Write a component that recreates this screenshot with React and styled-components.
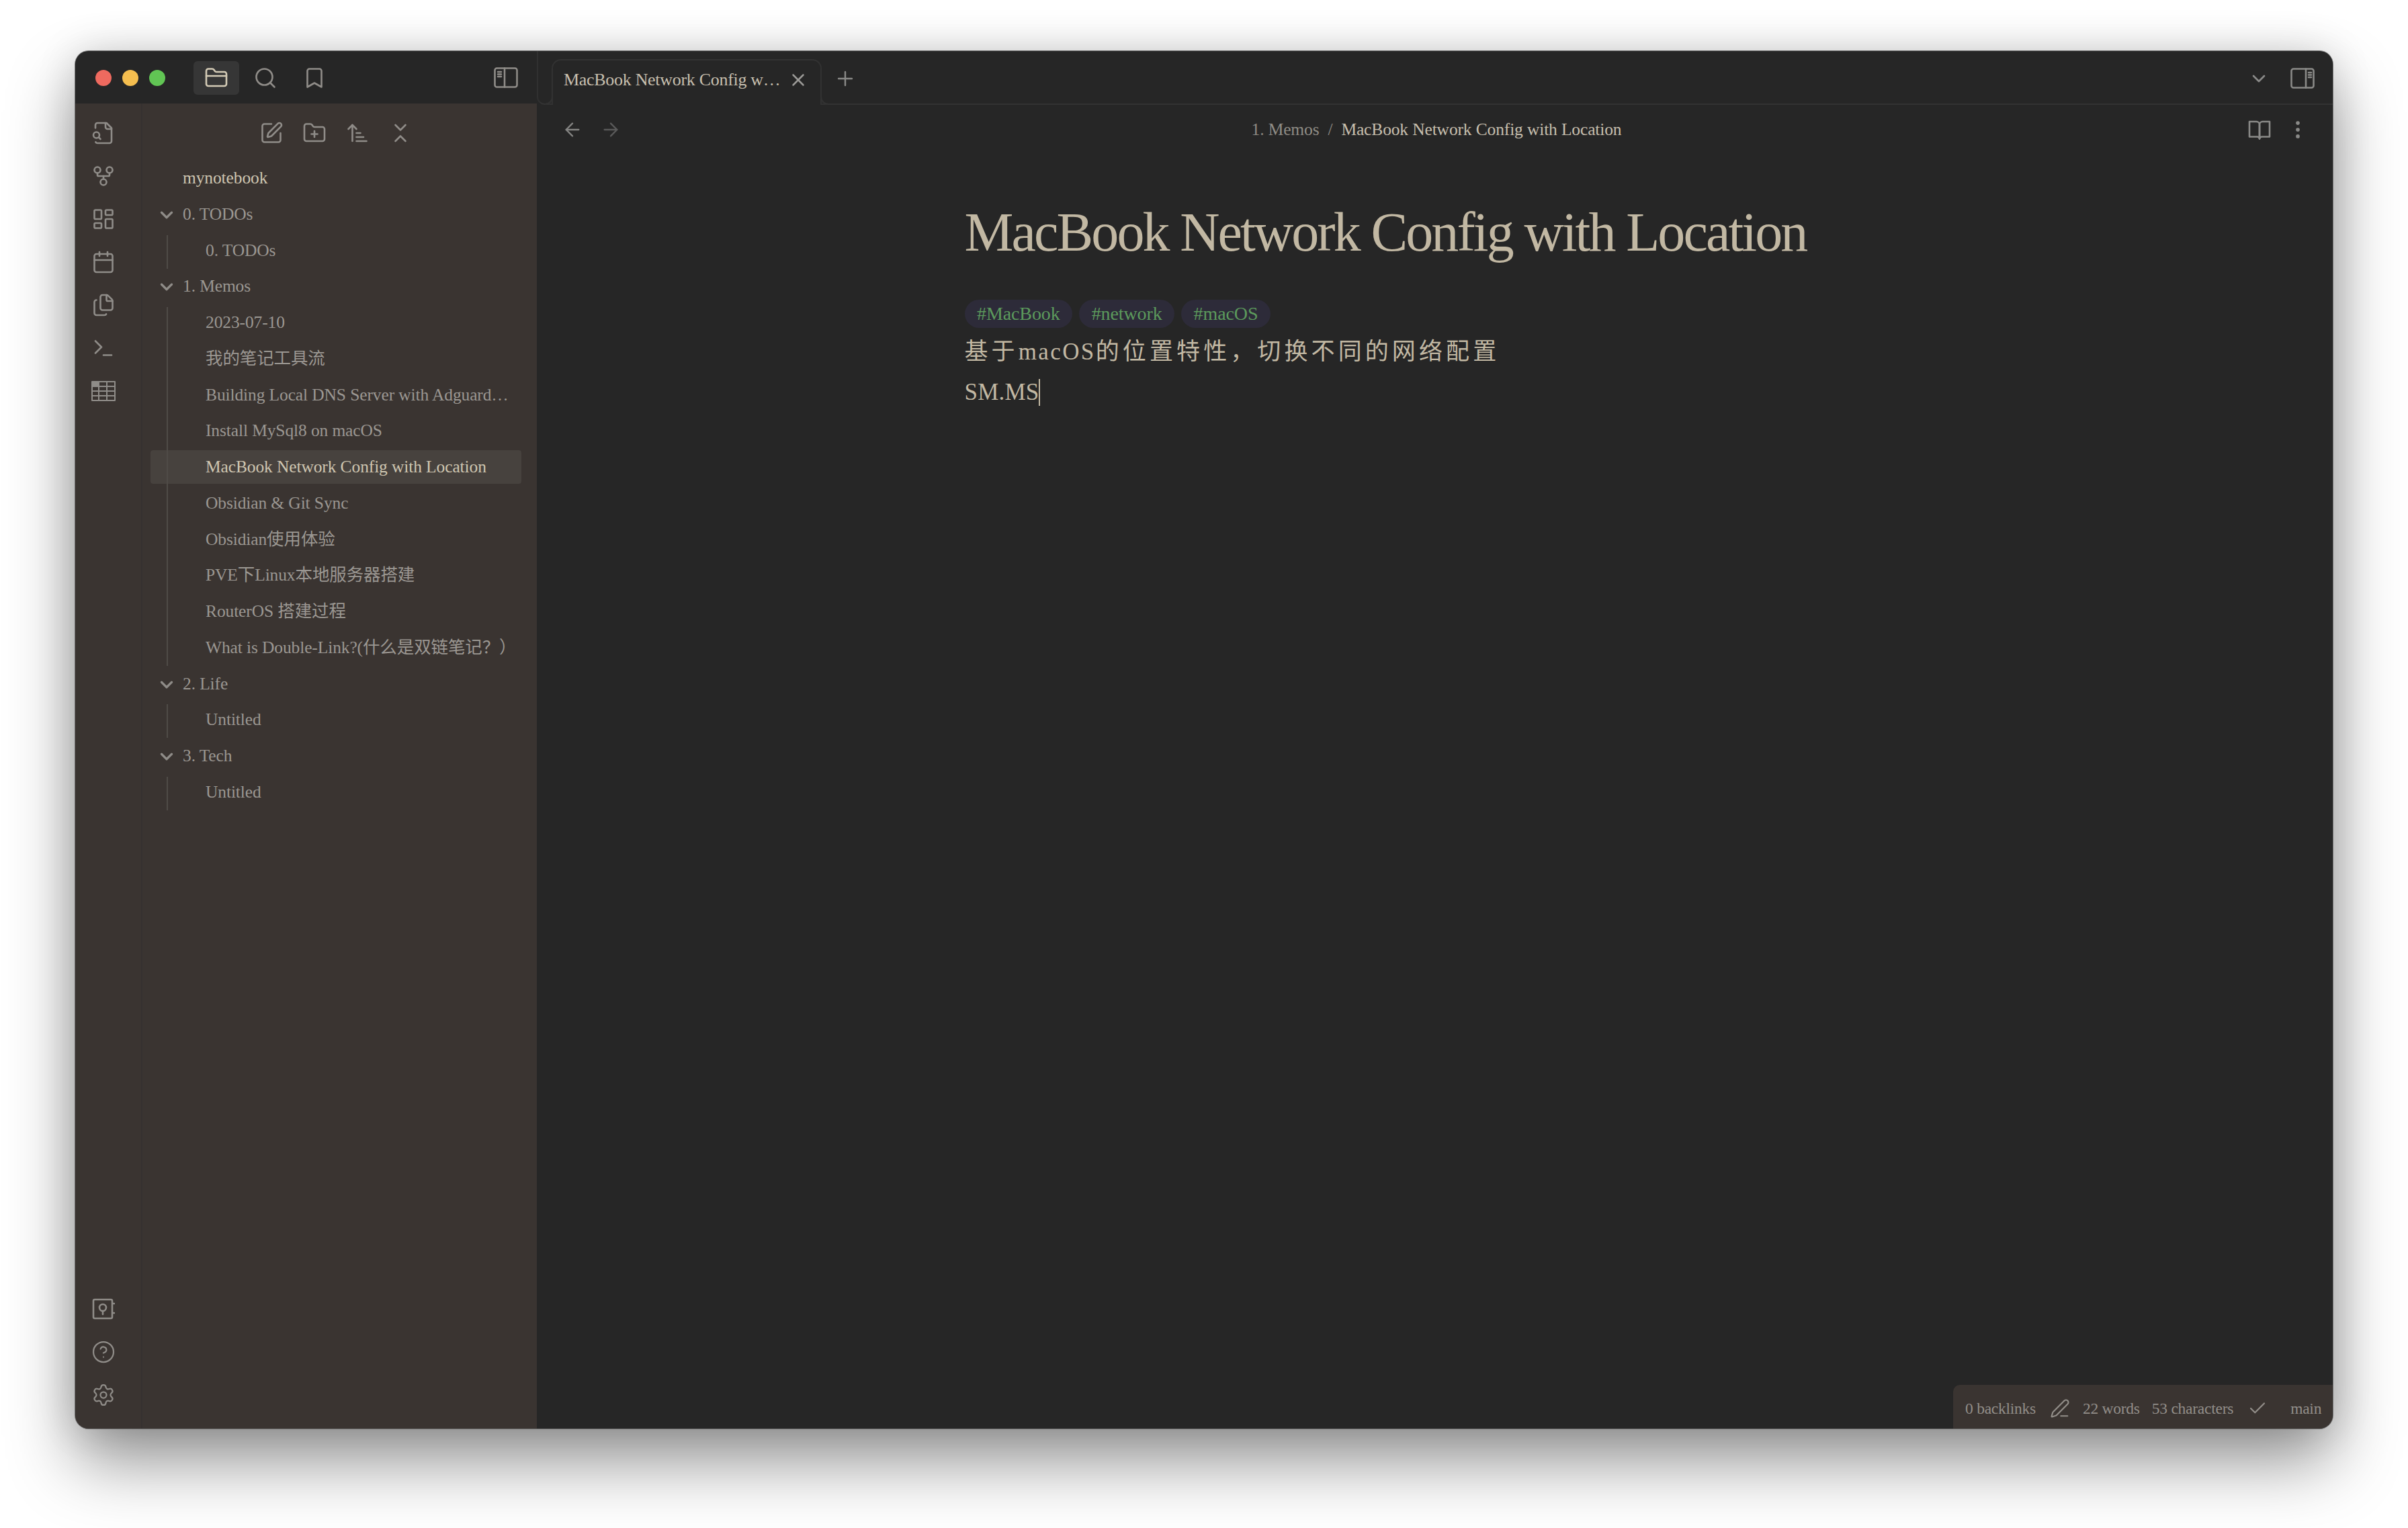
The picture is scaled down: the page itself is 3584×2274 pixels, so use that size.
import styled, { createGlobalStyle } from "styled-components";
import {
  ArrowLeft,
  ArrowRight,
  ArrowUpNarrowWide,
  Bookmark,
  Calendar,
  Check,
  ChevronDown,
  ChevronsDownUp,
  CircleHelp,
  EllipsisVertical,
  Files,
  FolderClosed,
  FolderPlus,
  GitFork,
  LayoutDashboard,
  PenLine,
  Plus,
  Search,
  Settings,
  SquarePen,
  Terminal,
  X,
} from "lucide-react";

const serif = `"Liberation Serif", "Noto Sans CJK SC", serif`;

const GlobalStyle = createGlobalStyle`
  html, body {
    margin: 0;
    background: #fff;
  }
  * {
    box-sizing: border-box;
  }
`;

const Page = styled.div`
  width: 3584px;
  height: 2274px;
  padding: 76px 112px 148px;
  background: #fff;
  font-family: ${serif};
  overflow: hidden;
`;

const Window = styled.div`
  position: relative;
  display: flex;
  width: 3360px;
  height: 2050px;
  border-radius: 20px;
  overflow: hidden;
  background: #262626;
`;

const WindowShadow = styled.div`
  width: 3360px;
  height: 2050px;
  border-radius: 20px;
  box-shadow: 0 0 0 1px rgba(90, 90, 90, 0.75), 0 50px 100px rgba(0, 0, 0, 0.42),
    0 0 60px rgba(0, 0, 0, 0.14);
`;

const LeftPane = styled.div`
  display: flex;
  flex-direction: column;
  flex: none;
  width: 687px;
`;

const TitleBar = styled.div`
  display: flex;
  align-items: center;
  flex: none;
  height: 78px;
  padding: 2px 12px 0 30px;
  background: #262626;
`;

const Lights = styled.div`
  display: flex;
  gap: 16px;
  margin-right: 42px;
`;

const Light = styled.span`
  width: 24px;
  height: 24px;
  border-radius: 50%;
  background: ${(p) => p.$color};
`;

const NavTabs = styled.div`
  display: flex;
  gap: 5px;
`;

const NavTab = styled.div`
  display: flex;
  align-items: center;
  justify-content: center;
  width: 68px;
  height: 50px;
  border-radius: 6px;
  color: ${(p) => (p.$active ? "#d3cab5" : "#8f8c88")};
  background: ${(p) => (p.$active ? "#363636" : "transparent")};
`;

const PanelToggle = styled(NavTab)`
  margin-left: auto;
`;

const SidebarBody = styled.div`
  display: flex;
  flex: 1;
  min-height: 0;
  background: #3a3431;
`;

const Ribbon = styled.div`
  display: flex;
  flex-direction: column;
  flex: none;
  width: 100px;
  padding: 12px 14px 18px 0;
  border-right: 2px solid #353130;
`;

const RibbonSpacer = styled.div`
  flex: 1;
`;

const RibbonItem = styled.div`
  display: flex;
  align-items: center;
  justify-content: center;
  height: 64px;
  color: #8f8c88;
`;

const Sidebar = styled.div`
  flex: 1;
  min-width: 0;
`;

const SideToolbar = styled.div`
  display: flex;
  align-items: center;
  justify-content: center;
  height: 86px;
  padding: 2px 12px 0 0;
  color: #8f8c88;
`;

const ToolButton = styled.div`
  display: flex;
  align-items: center;
  justify-content: center;
  width: 64px;
`;

const Tree = styled.div`
  display: flex;
  flex-direction: column;
  gap: 3.75px;
  padding: 0 23px 0 12px;
`;

const TreeFolder = styled.div`
  display: flex;
  flex-direction: column;
  gap: 3.75px;
`;

const TreeGroup = styled.div`
  position: relative;
  display: flex;
  flex-direction: column;
  gap: 3.75px;

  &::before {
    content: "";
    position: absolute;
    left: 24px;
    top: 2px;
    bottom: -2px;
    width: 2px;
    background: #4f4b47;
  }
`;

const Row = styled.div`
  display: flex;
  align-items: center;
  height: 50px;
  padding-left: ${(p) => (p.$child ? "82px" : "48px")};
  padding-right: 20px;
  border-radius: 4px;
  font-size: 25.5px;
  line-height: 32px;
  letter-spacing: -0.12px;
  white-space: nowrap;
  color: ${(p) => (p.$active ? "#cfc6b1" : "#9b9792")};
  background: ${(p) => (p.$selected ? "#47423e" : "transparent")};
`;

const FolderRow = styled(Row)`
  position: relative;
`;

const Chevron = styled.span`
  position: absolute;
  left: 9px;
  top: 11px;
  display: flex;
  color: #8f8c88;
`;

const RightPane = styled.div`
  display: flex;
  flex-direction: column;
  flex: 1;
  min-width: 0;
`;

const TabBar = styled.div`
  display: flex;
  align-items: stretch;
  flex: none;
  height: 80px;
  padding: 12px 0 0 20px;
  border-left: 2px solid #303030;
  border-bottom: 2px solid #323232;
  border-bottom-left-radius: 12px;
  background: #262626;
`;

const Tab = styled.div`
  position: relative;
  display: flex;
  align-items: center;
  justify-content: space-between;
  width: 402px;
  margin-bottom: -2px;
  padding: 0 18px 8px 16px;
  border: 2px solid #323232;
  border-bottom: none;
  border-radius: 14px 14px 0 0;
  background: #262626;
  color: #c7bfae;
  font-size: 26px;
  letter-spacing: -0.3px;
  white-space: nowrap;

  &::before,
  &::after {
    content: "";
    position: absolute;
    bottom: 0;
    width: 12px;
    height: 12px;
    border-bottom: 2px solid #323232;
  }
  &::before {
    left: -14px;
    border-right: 2px solid #323232;
    border-bottom-right-radius: 12px;
  }
  &::after {
    right: -14px;
    border-left: 2px solid #323232;
    border-bottom-left-radius: 12px;
  }
`;

const TabClose = styled.span`
  display: flex;
  color: #9a9996;
`;

const NewTab = styled.div`
  display: flex;
  align-items: center;
  margin-left: 18px;
  padding-bottom: 9px;
  color: #8a8a88;
`;

const TabBarEnd = styled.div`
  display: flex;
  align-items: center;
  gap: 31px;
  margin-left: auto;
  padding: 0 27px 9px 0;
  color: #8a8a88;
`;

const ViewHeader = styled.div`
  display: flex;
  align-items: center;
  flex: none;
  height: 74px;
  padding: 0 35px 0 37px;
  color: #8a8a88;
`;

const NavArrows = styled.div`
  display: flex;
  gap: 25px;
`;

const ArrowButton = styled.span`
  display: flex;
  color: ${(p) => (p.$disabled ? "#5a5a5a" : "#858583")};
`;

const Breadcrumb = styled.div`
  display: flex;
  gap: 13px;
  margin: 0 auto;
  padding-left: 6px;
  font-size: 25.5px;
  letter-spacing: -0.14px;
  color: #8f8c85;
`;

const CrumbCurrent = styled.span`
  color: #c7bfae;
`;

const ViewActions = styled.div`
  display: flex;
  align-items: center;
  gap: 22px;
`;

const Content = styled.div`
  width: 1400px;
  margin: 0 auto;
`;

const Title = styled.h1`
  margin: 70px 0 0;
  font-size: 82px;
  font-weight: 400;
  line-height: 92px;
  letter-spacing: -2.9px;
  white-space: nowrap;
  color: #c2b8a3;
`;

const Tags = styled.div`
  display: flex;
  gap: 10px;
  margin-top: 54px;
`;

const Tag = styled.span`
  display: flex;
  align-items: center;
  height: 42px;
  padding: 0 18.5px;
  border-radius: 21px;
  background: #2d2b39;
  color: #5c9a5c;
  font-size: 28px;
  letter-spacing: -0.1px;
`;

const Paragraph = styled.p`
  margin: 6px 0 0;
  height: 60px;
  line-height: 60px;
  font-size: 35px;
  letter-spacing: 5.1px;
  white-space: nowrap;
  color: #c2b8a3;
`;

const Latin = styled.span`
  letter-spacing: 2.4px;
`;

const CursorLine = styled.div`
  display: flex;
  align-items: center;
  height: 60px;
  font-size: 35px;
  letter-spacing: 0.2px;
  color: #c2b8a3;
`;

const Caret = styled.span`
  width: 2px;
  height: 40px;
  background: #c2b8a3;
`;

const StatusBar = styled.div`
  position: absolute;
  right: 0;
  bottom: 0;
  display: flex;
  align-items: center;
  width: 565px;
  height: 65px;
  padding: 5px 17px 0 18px;
  border-top-left-radius: 10px;
  background: #3a3431;
  color: #928e89;
  font-size: 23.5px;
  letter-spacing: -0.25px;
  white-space: nowrap;
`;

const StatusIcon = styled.span`
  display: flex;
  margin: ${(p) => p.$margin};
`;

const StatusText = styled.span`
  margin-right: ${(p) => p.$gap || "0"};
`;

const PanelIcon = ({ right }) => (
  <svg width="36" height="36" viewBox="0 0 36 36" fill="none" stroke="currentColor" strokeWidth="2.6" strokeLinecap="round" strokeLinejoin="round">
    <rect x="1.5" y="3.5" width="33" height="28" rx="3" />
    {right ? (
      <>
        <path d="M23 3.5v28" />
        <path d="M27 9h4M27 12.5h4M27 16h4" />
      </>
    ) : (
      <>
        <path d="M16 3.5v28" />
        <path d="M6 9h5M6 12.5h5M6 16h5" />
      </>
    )}
  </svg>
);

const TableIcon = () => (
  <svg width="36" height="30" viewBox="0 0 36 30" fill="none" stroke="currentColor" strokeWidth="2" strokeLinejoin="round">
    <rect x="1" y="1" width="10" height="7" fill="currentColor" stroke="none" />
    <rect x="1" y="1" width="34" height="28" />
    <path d="M1 8h34M1 15h34M1 22h34M11 1v28M23 1v28" />
  </svg>
);

const VaultIcon = () => (
  <svg width="34" height="32" viewBox="0 0 34 32" fill="none" stroke="currentColor" strokeWidth="2.6" strokeLinecap="round" strokeLinejoin="round">
    <rect x="2" y="2" width="28" height="28" rx="2" />
    <circle cx="16" cy="14" r="5" />
    <path d="M16 19v5M31 8h2M31 22h2" />
  </svg>
);

const FileSearchIcon = () => (
  <svg width="36" height="36" viewBox="0 0 24 24" fill="none" stroke="currentColor" strokeWidth="1.75" strokeLinecap="round" strokeLinejoin="round">
    <path d="M14 2v4a2 2 0 0 0 2 2h4" />
    <path d="M4.268 21a2 2 0 0 0 1.727 1H18a2 2 0 0 0 2-2V7l-5-5H6a2 2 0 0 0-2 2v3" />
    <circle cx="5" cy="14" r="3" />
    <path d="m9 18-1.5-1.5" />
  </svg>
);

const BookIcon = () => (
  <svg width="36" height="36" viewBox="0 0 24 24" fill="none" stroke="currentColor" strokeWidth="1.75" strokeLinecap="round" strokeLinejoin="round">
    <path d="M2 4h7a3 3 0 0 1 3 3v14a2.5 2.5 0 0 0-2.5-2H2z" />
    <path d="M22 4h-7a3 3 0 0 0-3 3v14a2.5 2.5 0 0 1 2.5-2H22z" />
  </svg>
);

const ribbonTop = [GitFork, LayoutDashboard, Calendar, Files, Terminal];

const memos = [
  "2023-07-10",
  "我的笔记工具流",
  "Building Local DNS Server with Adguard…",
  "Install MySql8 on macOS",
  "MacBook Network Config with Location",
  "Obsidian & Git Sync",
  "Obsidian使用体验",
  "PVE下Linux本地服务器搭建",
  "RouterOS 搭建过程",
  "What is Double-Link?(什么是双链笔记？）",
];

const groups = [
  { name: "0. TODOs", items: ["0. TODOs"] },
  { name: "1. Memos", items: memos },
  { name: "2. Life", items: ["Untitled"] },
  { name: "3. Tech", items: ["Untitled"] },
];

const currentNote = "MacBook Network Config with Location";

export default function App() {
  return (
    <Page>
      <GlobalStyle />
      <WindowShadow>
        <Window>
          <LeftPane>
            <TitleBar>
              <Lights>
                <Light $color="#ee6a5f" />
                <Light $color="#f5be4f" />
                <Light $color="#61c554" />
              </Lights>
              <NavTabs>
                <NavTab $active>
                  <FolderClosed size={36} strokeWidth={1.75} />
                </NavTab>
                <NavTab>
                  <Search size={36} strokeWidth={1.75} />
                </NavTab>
                <NavTab>
                  <Bookmark size={36} strokeWidth={1.75} />
                </NavTab>
              </NavTabs>
              <PanelToggle>
                <PanelIcon />
              </PanelToggle>
            </TitleBar>
            <SidebarBody>
              <Ribbon>
                <RibbonItem>
                  <FileSearchIcon />
                </RibbonItem>
                {ribbonTop.map((Icon, i) => (
                  <RibbonItem key={i}>
                    <Icon size={36} strokeWidth={1.75} />
                  </RibbonItem>
                ))}
                <RibbonItem>
                  <TableIcon />
                </RibbonItem>
                <RibbonSpacer />
                <RibbonItem>
                  <VaultIcon />
                </RibbonItem>
                <RibbonItem>
                  <CircleHelp size={36} strokeWidth={1.5} />
                </RibbonItem>
                <RibbonItem>
                  <Settings size={36} strokeWidth={1.5} />
                </RibbonItem>
              </Ribbon>
              <Sidebar>
                <SideToolbar>
                  <ToolButton>
                    <SquarePen size={36} strokeWidth={1.75} />
                  </ToolButton>
                  <ToolButton>
                    <FolderPlus size={36} strokeWidth={1.75} />
                  </ToolButton>
                  <ToolButton>
                    <ArrowUpNarrowWide size={36} strokeWidth={1.75} />
                  </ToolButton>
                  <ToolButton>
                    <ChevronsDownUp size={36} strokeWidth={1.75} />
                  </ToolButton>
                </SideToolbar>
                <Tree>
                  <Row $active>mynotebook</Row>
                  {groups.map((group) => (
                    <TreeFolder key={group.name}>
                      <FolderRow>
                        <Chevron>
                          <ChevronDown size={30} strokeWidth={2.6} />
                        </Chevron>
                        {group.name}
                      </FolderRow>
                      <TreeGroup>
                        {group.items.map((item) => (
                          <Row
                            key={item}
                            $child
                            $active={item === currentNote}
                            $selected={item === currentNote}
                          >
                            {item}
                          </Row>
                        ))}
                      </TreeGroup>
                    </TreeFolder>
                  ))}
                </Tree>
              </Sidebar>
            </SidebarBody>
          </LeftPane>

          <RightPane>
            <TabBar>
              <Tab>
                MacBook Network Config w…
                <TabClose>
                  <X size={30} strokeWidth={2} />
                </TabClose>
              </Tab>
              <NewTab>
                <Plus size={34} strokeWidth={1.75} />
              </NewTab>
              <TabBarEnd>
                <ChevronDown size={32} strokeWidth={2} />
                <PanelIcon right />
              </TabBarEnd>
            </TabBar>
            <ViewHeader>
              <NavArrows>
                <ArrowButton>
                  <ArrowLeft size={32} strokeWidth={1.75} />
                </ArrowButton>
                <ArrowButton $disabled>
                  <ArrowRight size={32} strokeWidth={1.75} />
                </ArrowButton>
              </NavArrows>
              <Breadcrumb>
                <span>1. Memos</span>
                <span>/</span>
                <CrumbCurrent>{currentNote}</CrumbCurrent>
              </Breadcrumb>
              <ViewActions>
                <BookIcon />
                <EllipsisVertical size={34} strokeWidth={2} />
              </ViewActions>
            </ViewHeader>
            <Content>
              <Title>{currentNote}</Title>
              <Tags>
                <Tag>#MacBook</Tag>
                <Tag>#network</Tag>
                <Tag>#macOS</Tag>
              </Tags>
              <Paragraph>
                基于<Latin>macOS</Latin>的位置特性，切换不同的网络配置
              </Paragraph>
              <CursorLine>
                SM.MS
                <Caret />
              </CursorLine>
            </Content>
          </RightPane>

          <StatusBar>
            <StatusText>0 backlinks</StatusText>
            <StatusIcon $margin="0 19px 0 21px">
              <PenLine size={30} strokeWidth={1.75} />
            </StatusIcon>
            <StatusText $gap="18px">22 words</StatusText>
            <StatusText>53 characters</StatusText>
            <StatusIcon $margin="0 34px 0 21px">
              <Check size={30} strokeWidth={1.75} />
            </StatusIcon>
            <StatusText>main</StatusText>
          </StatusBar>
        </Window>
      </WindowShadow>
    </Page>
  );
}
